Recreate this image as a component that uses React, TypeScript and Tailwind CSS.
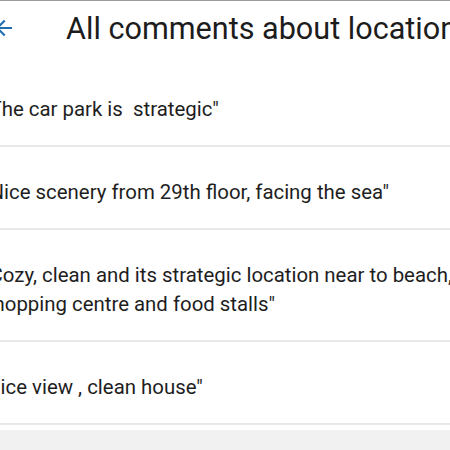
export default function App() {
  const rows = [
    ['"The car park is  strategic"'],
    ['"Nice scenery from 29th floor, facing the sea"'],
    ['"Cozy, clean and its strategic location near to beach,', 'shopping centre and food stalls"'],
    ['"nice view , clean house"'],
  ];
  return (
    <div className="w-[450px] h-[450px] overflow-hidden bg-white flex flex-col" style={{ fontFamily: 'Roboto, sans-serif' }}>
      <div className="h-[64px] shrink-0 border-t border-[#9a9a9a] flex items-start">
        <svg width="24" height="24" viewBox="0 0 24 24" className="ml-[-8px] mt-[15px] shrink-0" fill="#1f6fb2">
          <path d="M20 10.9H7.9l5.6-5.6L12 3.8l-8.2 8.2 8.2 8.2 1.5-1.5-5.6-5.6H20v-2.2z" />
        </svg>
        <div className="ml-[50px] mt-[10px] text-[30.6px] leading-[36px] text-[#1c1c1c] whitespace-pre">
          All comments about location
        </div>
      </div>
      {rows.map((lines, i) => (
        <div key={i} className="shrink-0 border-b-2 border-[#e8e8e8] pt-[31px] pb-[21px]">
          <div className="ml-[-17px] text-[20.4px] leading-[29px] text-[#1e1e1e] whitespace-pre">
            {lines.map((l, j) => (
              <div key={j}>{l}</div>
            ))}
          </div>
        </div>
      ))}
      <div className="h-[5px] shrink-0" />
      <div className="flex-1 bg-[#f1f1f1]" />
    </div>
  );
}
